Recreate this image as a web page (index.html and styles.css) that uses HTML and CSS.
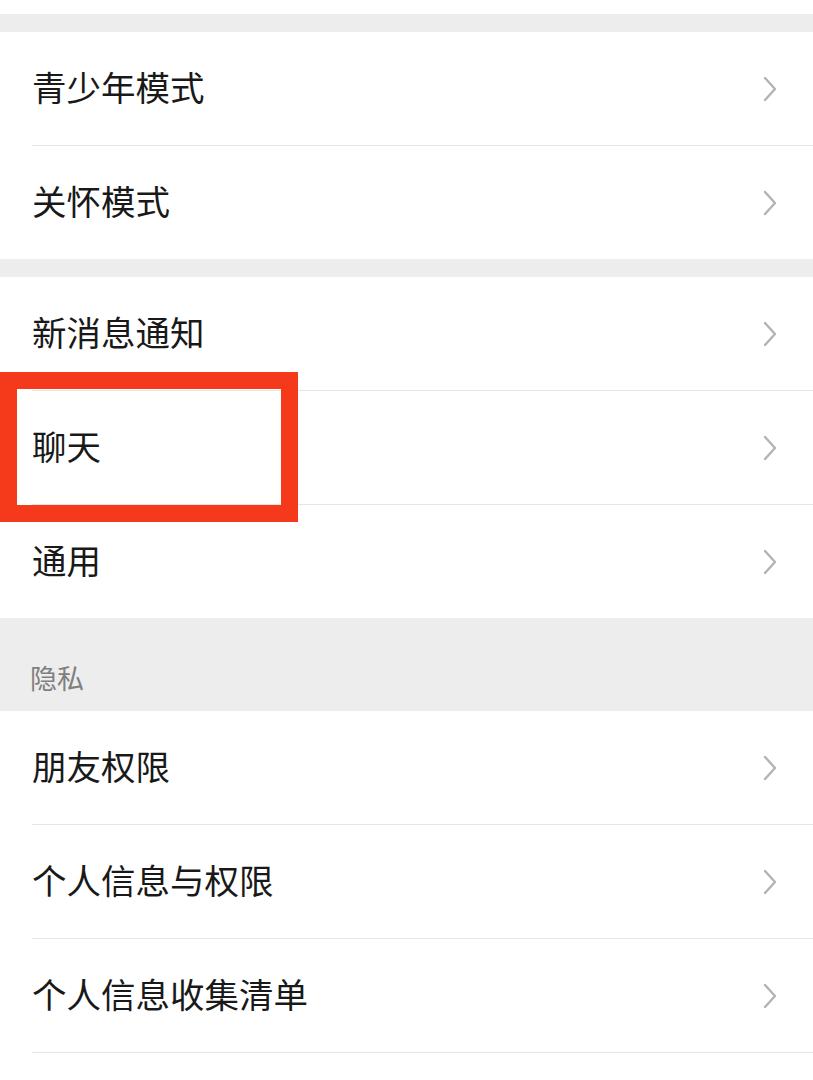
FILE: index.html
```html
<!DOCTYPE html>
<html lang="zh-CN">
<head>
<meta charset="utf-8">
<title>设置</title>
<link rel="stylesheet" href="styles.css">
</head>
<body>
<div class="page">
  <div class="top-strip"></div>
  <div class="gap"></div>
  <div class="group">
    <div class="row"><span class="label">青少年模式</span><svg class="chev" viewBox="0 0 14 26"><path d="M2 2 L12 13 L2 24"/></svg></div>
    <div class="row"><span class="label">关怀模式</span><svg class="chev" viewBox="0 0 14 26"><path d="M2 2 L12 13 L2 24"/></svg></div>
  </div>
  <div class="gap"></div>
  <div class="group">
    <div class="row"><span class="label">新消息通知</span><svg class="chev" viewBox="0 0 14 26"><path d="M2 2 L12 13 L2 24"/></svg></div>
    <div class="row highlighted"><span class="label">聊天</span><svg class="chev" viewBox="0 0 14 26"><path d="M2 2 L12 13 L2 24"/></svg><div class="mark"></div></div>
    <div class="row"><span class="label">通用</span><svg class="chev" viewBox="0 0 14 26"><path d="M2 2 L12 13 L2 24"/></svg></div>
  </div>
  <div class="section-title">隐私</div>
  <div class="group open">
    <div class="row"><span class="label">朋友权限</span><svg class="chev" viewBox="0 0 14 26"><path d="M2 2 L12 13 L2 24"/></svg></div>
    <div class="row"><span class="label">个人信息与权限</span><svg class="chev" viewBox="0 0 14 26"><path d="M2 2 L12 13 L2 24"/></svg></div>
    <div class="row"><span class="label">个人信息收集清单</span><svg class="chev" viewBox="0 0 14 26"><path d="M2 2 L12 13 L2 24"/></svg></div>
  </div>
</div>
</body>
</html>
```
FILE: styles.css
```css
html, body {
  margin: 0;
  padding: 0;
  background: #ffffff;
}
.page {
  width: 813px;
  height: 1080px;
  overflow: hidden;
  font-family: "Noto Sans CJK SC", "Noto Sans", sans-serif;
  color: #191919;
}
.top-strip {
  height: 14px;
  background: #ffffff;
}
.gap {
  height: 18px;
  background: #ededed;
}
.group {
  background: #ffffff;
  padding-left: 32px;
}
.row {
  position: relative;
  height: 113px;
  display: flex;
  align-items: center;
  justify-content: space-between;
  padding-right: 36px;
  border-bottom: 1px solid #e6e6e6;
}
.group .row:last-child {
  border-bottom: none;
}
.group.open .row:last-child {
  border-bottom: 1px solid #e6e6e6;
}
.label {
  font-size: 34.5px;
  line-height: 1;
  padding-bottom: 4px;
}
.chev {
  width: 14px;
  height: 26px;
  fill: none;
  stroke: #b3b3b3;
  stroke-width: 2.4;
  stroke-linecap: round;
  stroke-linejoin: round;
}
.section-title {
  height: 93px;
  background: #ededed;
  box-sizing: border-box;
  padding: 44px 0 0 30px;
  font-size: 27px;
  line-height: 32px;
  color: #7f7f7f;
}
.mark {
  position: absolute;
  left: -32px;
  top: -19px;
  width: 298px;
  height: 150px;
  box-sizing: border-box;
  border: 17px solid #f5391b;
  pointer-events: none;
}
```
